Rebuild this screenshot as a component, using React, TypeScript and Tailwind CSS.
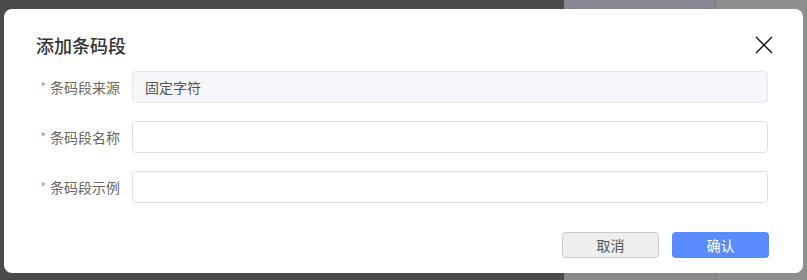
import React from "react";

const font = {fontFamily: '"Noto Sans CJK SC", "Noto Sans", sans-serif'};

function Field({label, value, disabled}: { label: string, value?: string, disabled?: boolean }) {
    return <div className="flex items-center h-[32px]">
        <label className="w-[128px] flex items-center justify-end pr-[12px] text-[14px] text-[#666666]">
            <span className="text-[#f56c6c] mr-[4px] text-[12px]">*</span>{label}
        </label>
        <input
            readOnly
            value={value || ''}
            className={disabled
                ? "flex-1 h-[32px] rounded-[4px] border border-[#e4e7ed] bg-[#f5f6f9] px-[12px] text-[14px] text-[#555555] outline-none"
                : "flex-1 h-[32px] rounded-[4px] border border-[#dcdfe6] bg-white px-[12px] text-[14px] text-[#555555] outline-none"}
            style={font}
        />
    </div>
}

export default function App() {
    return <div className="relative w-[807px] h-[280px] overflow-hidden bg-[#4b4b4b]" style={font}>
        {/* page behind the mask */}
        <div className="flex h-full">
            <div className="w-[564px] bg-[#4b4b4b]"/>
            <div className="w-[151px] flex flex-col">
                <div className="h-[9px] bg-[#878893]"/>
                <div className="flex-1 bg-[#8a8a8a]"/>
            </div>
            <div className="flex-1 bg-[#8e8e8e] border-l border-[#7a7a7a]"/>
        </div>

        {/* dialog */}
        <div className="absolute left-[4px] top-[9px] w-[799px] h-[264px] bg-white rounded-[8px] px-[32px] pt-[24px]">
            <div className="flex items-center justify-between h-[24px]">
                <h2 className="text-[18px] font-medium text-[#333333] leading-none">添加条码段</h2>
                <svg width="18" height="18" viewBox="0 0 18 18" className="mr-[-2px]">
                    <path d="M1 1 L17 17 M17 1 L1 17" stroke="#111111" strokeWidth="1.4" fill="none"/>
                </svg>
            </div>
            <div className="flex flex-col gap-[18px] mt-[14px] pr-[3px] -ml-[32px]">
                <Field label="条码段来源" value="固定字符" disabled/>
                <Field label="条码段名称"/>
                <Field label="条码段示例"/>
            </div>
            <div className="flex justify-end gap-[13px] mt-[29px] pr-[2px]">
                <button className="w-[97px] h-[26px] rounded-[4px] border border-[#c8ccd1] bg-[#efeeee] text-[14px] text-[#555555]">取消</button>
                <button className="w-[97px] h-[26px] rounded-[4px] bg-[#5b8cff] text-[14px] text-white">确认</button>
            </div>
        </div>
    </div>
}
